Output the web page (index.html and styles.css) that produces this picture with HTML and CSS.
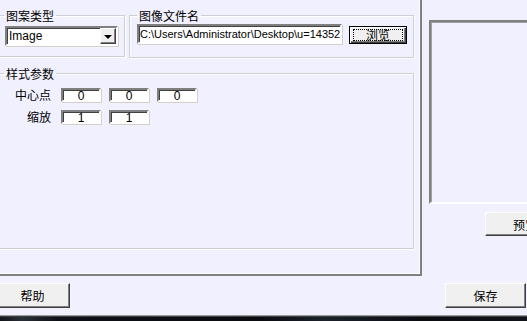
FILE: index.html
```html
<!DOCTYPE html>
<html>
<head>
    <title>图案设置</title>
    <link rel="stylesheet" href="styles.css">
</head>
<body>
    <div class="dialog">
        <div class="main">
            <div class="panel">
                <div class="group-row">
                    <fieldset class="group group-type">
                        <legend>图案类型</legend>
                        <div class="combo">
                            <span class="combo-text">Image</span>
                            <span class="combo-btn"><span class="arrow"></span></span>
                        </div>
                    </fieldset>

                    <fieldset class="group group-file">
                        <legend>图像文件名</legend>
                        <div class="file-line">
                            <div class="field path">C:\Users\Administrator\Desktop\u=14352</div>
                            <button class="button default">
                                <span class="focus">浏览</span>
                            </button>
                        </div>
                    </fieldset>
                </div>

                <fieldset class="group group-style">
                    <legend>样式参数</legend>
                    <div class="params">
                        <span class="label">中心点</span>
                        <div class="inputs">
                            <div class="field num">0</div>
                            <div class="field num">0</div>
                            <div class="field num">0</div>
                        </div>
                        <span class="label">缩放</span>
                        <div class="inputs">
                            <div class="field num">1</div>
                            <div class="field num">1</div>
                        </div>
                    </div>
                </fieldset>
            </div>

            <div class="side">
                <div class="preview"></div>
                <button class="button preview-btn">预览</button>
            </div>
        </div>

        <div class="footer">
            <button class="button help-btn">帮助</button>
            <button class="button save-btn">保存</button>
        </div>

        <div class="taskbar"></div>
    </div>
</body>
</html>
```

FILE: styles.css
```css
:root {
    --background: #f0f0ff;
    --face: #f0f0f0;
    --shadow: #808080;
    --dark-shadow: #404040;
    --etch: #c9d1d5;
    --text: #000000;
}

* {
    margin: 0;
    padding: 0;
    box-sizing: border-box;
}

html, body {
    width: 527px;
    height: 321px;
    overflow: hidden;
}

body {
    background-color: var(--background);
    color: var(--text);
    font-family: "Noto Sans CJK SC", "Liberation Sans", sans-serif;
    font-size: 12px;
}

.dialog {
    display: flex;
    flex-direction: column;
    width: 532px;
    height: 321px;
    margin-left: -5px;
}

.main {
    display: flex;
    align-items: flex-start;
}

/* left raised panel */
.panel {
    width: 427px;
    height: 276px;
    padding: 8px 6px 0 1px;
    border-right: 2px solid var(--shadow);
    border-bottom: 2px solid var(--shadow);
    box-shadow: inset -1px -1px 0 #ffffff;
}

.group-row {
    display: flex;
    gap: 4px;
    align-items: flex-start;
}

.group {
    border: 1px solid var(--etch);
    box-shadow: 1px 1px 0 #ffffff, inset 1px 1px 0 #ffffff;
    min-width: 0;
    padding-left: 0;
}

.group legend {
    margin-left: 7px;
    padding: 0 2px;
    line-height: 15px;
    font-size: 12px;
}

.group-type {
    width: 129px;
    padding: 3px 0 10px 0;
}

.group-type .combo {
    margin-left: 8px;
}

.group-file {
    width: 285px;
    padding: 1px 0 13px 0;
}

.group-file .file-line {
    margin-left: 7px;
}

.group-style {
    width: 418px;
    height: 183px;
    margin-top: 8px;
    padding: 7px 0 0 0;
}

.group-style .params {
    margin-left: 16px;
}

/* sunken controls */
.field,
.combo {
    background-color: #ffffff;
    border: 2px solid;
    border-color: var(--shadow) #ffffff #ffffff var(--shadow);
    box-shadow: inset 1px 1px 0 var(--dark-shadow), 1px 1px 0 #d4d0c8;
}

.combo {
    display: flex;
    align-items: center;
    width: 113px;
    height: 20px;
    padding-left: 2px;
    font-family: "Liberation Sans", sans-serif;
    font-size: 12px;
}

.combo-text {
    flex: 1;
}

.combo-btn {
    display: flex;
    align-items: center;
    justify-content: center;
    width: 16px;
    height: 16px;
    background-color: var(--face);
    border: 1px solid;
    border-color: #ffffff var(--dark-shadow) var(--dark-shadow) #ffffff;
    box-shadow: inset -1px -1px 0 var(--shadow);
}

.arrow {
    width: 0;
    height: 0;
    border-left: 4px solid transparent;
    border-right: 4px solid transparent;
    border-top: 4px solid #000000;
    margin-top: 1px;
}

.file-line {
    display: flex;
    align-items: flex-start;
    gap: 7px;
}

.path {
    display: flex;
    align-items: center;
    width: 205px;
    height: 20px;
    padding: 0 0 0 1px;
    font-family: "Liberation Sans", sans-serif;
    font-size: 11px;
    white-space: nowrap;
    overflow: hidden;
}

/* buttons */
.button {
    display: flex;
    align-items: center;
    justify-content: center;
    background-color: var(--face);
    border: 1px solid;
    border-color: #ffffff var(--dark-shadow) var(--dark-shadow) #ffffff;
    box-shadow: inset -1px -1px 0 var(--shadow);
    font-family: "Noto Sans CJK SC", sans-serif;
    font-size: 12px;
    color: var(--text);
}

.button.default {
    width: 58px;
    height: 18px;
    margin-top: 2px;
    border: 1px solid #000000;
    box-shadow: inset 1px 1px 0 #ffffff, inset -1px -1px 0 var(--dark-shadow), inset -2px -2px 0 var(--shadow);
}

.focus {
    display: flex;
    align-items: center;
    justify-content: center;
    width: 50px;
    height: 12px;
    border: 1px dotted #000000;
    line-height: 10px;
}

/* parameter grid */
.params {
    display: grid;
    grid-template-columns: 38px auto;
    column-gap: 10px;
    row-gap: 8px;
    align-items: center;
}

.label {
    text-align: right;
    line-height: 14px;
}

.inputs {
    display: flex;
    gap: 8px;
}

.num {
    display: flex;
    align-items: center;
    justify-content: center;
    width: 40px;
    height: 14px;
    padding-top: 1px;
    font-family: "Liberation Sans", sans-serif;
    font-size: 12px;
    line-height: 10px;
}

/* right side */
.side {
    display: flex;
    flex-direction: column;
    padding: 20px 0 0 7px;
}

.preview {
    width: 120px;
    height: 184px;
    border: 2px solid;
    border-color: var(--shadow) #ffffff #ffffff var(--shadow);
    box-shadow: inset 1px 1px 0 #a0a0a0;
}

.preview-btn {
    width: 70px;
    height: 24px;
    margin: 8px 0 0 56px;
    justify-content: flex-start;
    padding-left: 27px;
}

.footer {
    display: flex;
    justify-content: space-between;
    margin-top: 7px;
    padding-right: 1px;
}

.help-btn {
    width: 75px;
    height: 25px;
}

.save-btn {
    width: 81px;
    height: 25px;
}

.taskbar {
    height: 6px;
    margin-top: 7px;
    border-top: 1px solid #9a9a9a;
    background: linear-gradient(90deg, #0c0f14 0%, #2a2f36 5%, #0d1015 12%, #0a0c10 50%, #1c222a 62%, #0a0c10 80%, #101318 100%);
    box-shadow: inset 0 1px 0 #3a3f46;
}
```
